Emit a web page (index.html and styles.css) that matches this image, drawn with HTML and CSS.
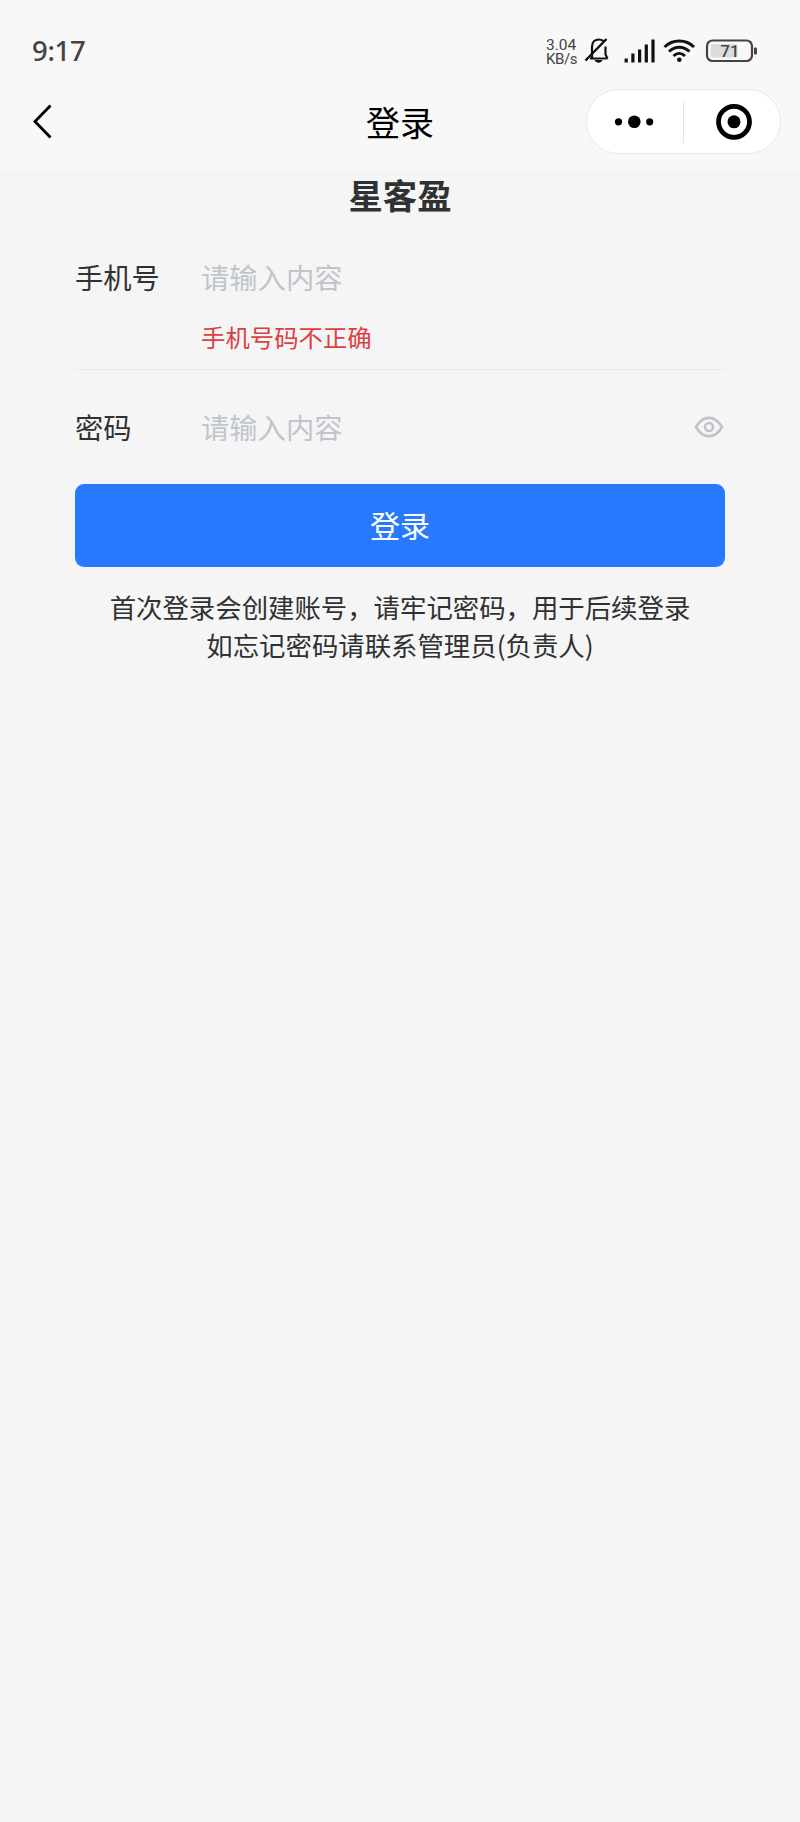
FILE: index.html
```
<!DOCTYPE html>
<html lang="zh-CN">
<head>
  <meta charset="UTF-8">
  <meta name="viewport" content="width=device-width, initial-scale=1.0">
  <title>登录</title>
  <link rel="stylesheet" href="styles.css">
</head>
<body>
  <header class="header">
    <div class="status-bar">
      <span class="time">9:17</span>
      <div class="speed"><span>3.04</span><span class="unit">KB/s</span></div>
      <svg class="status-icons" width="180" height="32" viewBox="0 0 180 32" fill="none" stroke="#111">
        <!-- muted bell -->
        <path d="M6 23.500h17.500M8 23v-11c0-5 3-7.500 7-7.500 2.500 0 4 .8 5.300 2.200M21.500 11.500v8l2 4" stroke-width="2.200"/>
        <path d="M1.500 25.500 22.500 4" stroke-width="2.500"/>
        <path d="M10.500 25h8c-1.500 3.500-6.500 3.500-8 0z" fill="#111" stroke="none"/>
        <!-- signal -->
        <path d="M42.200 27.500v-4M48.900 27.500v-9M55.600 27.500v-13M62.300 27.500v-18M69 27.500v-23" stroke-width="3.200"/>
        <!-- wifi -->
        <path d="M80.500 12c8-8 21.500-8 29.500 0M85 16.500c6-5.700 14.500-5.700 20.500 0M89.500 21c3.500-3.300 8-3.300 11.500 0" stroke-width="3"/>
        <circle cx="95.300" cy="24.800" r="2.300" fill="#111" stroke="none"/>
        <!-- battery -->
        <rect x="123" y="5.500" width="45" height="20.500" rx="5.500" stroke="#444" stroke-width="2.200"/>
        <rect x="126.500" y="9" width="27" height="13.500" rx="3" fill="#dcdcdc" stroke="none"/>
        <rect x="170" y="12.500" width="3" height="7" rx="1" fill="#444" stroke="none"/>
        <text class="battery-text" x="146" y="21.800" text-anchor="middle">71</text>
      </svg>
    </div>
    <div class="nav">
      <svg class="back" width="20" height="36" viewBox="0 0 20 36" fill="none" stroke="#000" stroke-width="2.800">
        <path d="M18.500 2.500 3 18.500 18.500 34.500"/>
      </svg>
      <h1 class="nav-title">登录</h1>
      <div class="capsule">
        <svg width="193" height="63" viewBox="0 0 193 63">
          <circle cx="31.500" cy="31.800" r="3.600"/>
          <circle cx="47.300" cy="31.800" r="6.300"/>
          <circle cx="62.700" cy="31.800" r="3.600"/>
          <path d="M96.500 12v41" stroke="#e5e5e5"/>
          <circle cx="147" cy="31.800" r="15.500" fill="none" stroke="#000" stroke-width="4.800"/>
          <circle cx="147" cy="31.800" r="6.500"/>
        </svg>
      </div>
    </div>
  </header>

  <main class="container">
    <h2 class="app-name">星客盈</h2>
    <form>
      <div class="field field-phone">
        <label for="phone">手机号</label>
        <div class="field-body">
          <input type="text" id="phone" placeholder="请输入内容">
          <div class="error">手机号码不正确</div>
        </div>
      </div>
      <div class="field">
        <label for="password">密码</label>
        <div class="field-body">
          <input type="password" id="password" placeholder="请输入内容">
        </div>
        <svg class="eye" width="30" height="22" viewBox="0 0 30 22" fill="none" stroke="#c2c4c9" stroke-width="2.700">
          <path d="M2 11C9-1.300 21-1.300 28 11 21 23.300 9 23.300 2 11z" stroke-linejoin="round"/>
          <circle cx="15" cy="11" r="4"/>
        </svg>
      </div>
      <button type="button" class="button">登录</button>
    </form>
    <p class="notice">首次登录会创建账号，请牢记密码，用于后续登录<br>如忘记密码请联系管理员(负责人)</p>
  </main>
</body>
</html>
```
FILE: styles.css
```
* {
  box-sizing: border-box;
}
body {
  margin: 0;
  min-height: 1822px;
  background-color: #f5f5f5;
  color: #303133;
  font-family: "Noto Sans CJK SC", sans-serif;
}
.header {
  height: 170px;
  padding-top: 30px;
  background-color: #f8f8f8;
}
.status-bar {
  display: flex;
  align-items: center;
  height: 42px;
  padding-left: 32px;
}
.time {
  flex: 1;
  padding-bottom: 2px;
  color: #444;
  font-family: "Noto Sans", sans-serif;
  font-size: 27.5px;
  font-weight: 500;
  letter-spacing: -0.3px;
}
.speed {
  display: flex;
  flex-direction: column;
  width: 38px;
  padding-top: 2px;
  color: #444;
  font-family: Roboto, sans-serif;
  font-size: 15.5px;
  line-height: 14px;
}
.unit {
  font-size: 15px;
  letter-spacing: -0.4px;
}
.status-icons {
  margin-right: 36px;
}
.battery-text {
  fill: #444;
  stroke: none;
  font-family: Roboto, sans-serif;
  font-size: 16.5px;
  font-weight: 500;
}
.nav {
  display: grid;
  grid-template-columns: 1fr auto 1fr;
  align-items: center;
  height: 98px;
  padding: 0 19px;
}
.back {
  margin-left: 13px;
}
.nav-title {
  margin: 0;
  color: #000;
  font-size: 34px;
  font-weight: 400;
}
.capsule {
  justify-self: end;
  width: 195px;
  height: 65px;
  border: 1px solid #e8e8e8;
  border-radius: 33px;
  background-color: #fff;
}
.capsule svg {
  display: block;
}
.container {
  padding: 0 75px;
}
.app-name {
  height: 50px;
  margin: 0;
  font-size: 34.4px;
  line-height: 48px;
  text-align: center;
}
.field {
  display: flex;
  align-items: center;
  height: 114px;
  font-size: 28.3px;
  line-height: 40px;
}
.field-phone {
  align-items: flex-start;
  height: 150px;
  padding-top: 37px;
  border-bottom: 1px solid #e9eaec;
}
.field label {
  width: 126px;
}
.field-body {
  flex: 1;
}
.field input {
  display: block;
  width: 100%;
  height: 40px;
  padding: 0;
  border: none;
  background: none;
  font: inherit;
}
.field input::placeholder {
  color: #c0c4cc;
}
.error {
  margin-top: 22px;
  color: #dd4040;
  font-size: 24.4px;
  line-height: 36px;
}
.eye {
  margin-right: 1px;
}
.button {
  display: block;
  width: 100%;
  height: 83px;
  padding: 0 0 3px;
  border: none;
  border-radius: 9px;
  background-color: #2979ff;
  color: white;
  font-family: inherit;
  font-size: 30px;
}
.notice {
  margin: 21px 0 0;
  font-size: 26.4px;
  line-height: 38px;
  text-align: center;
}
```
